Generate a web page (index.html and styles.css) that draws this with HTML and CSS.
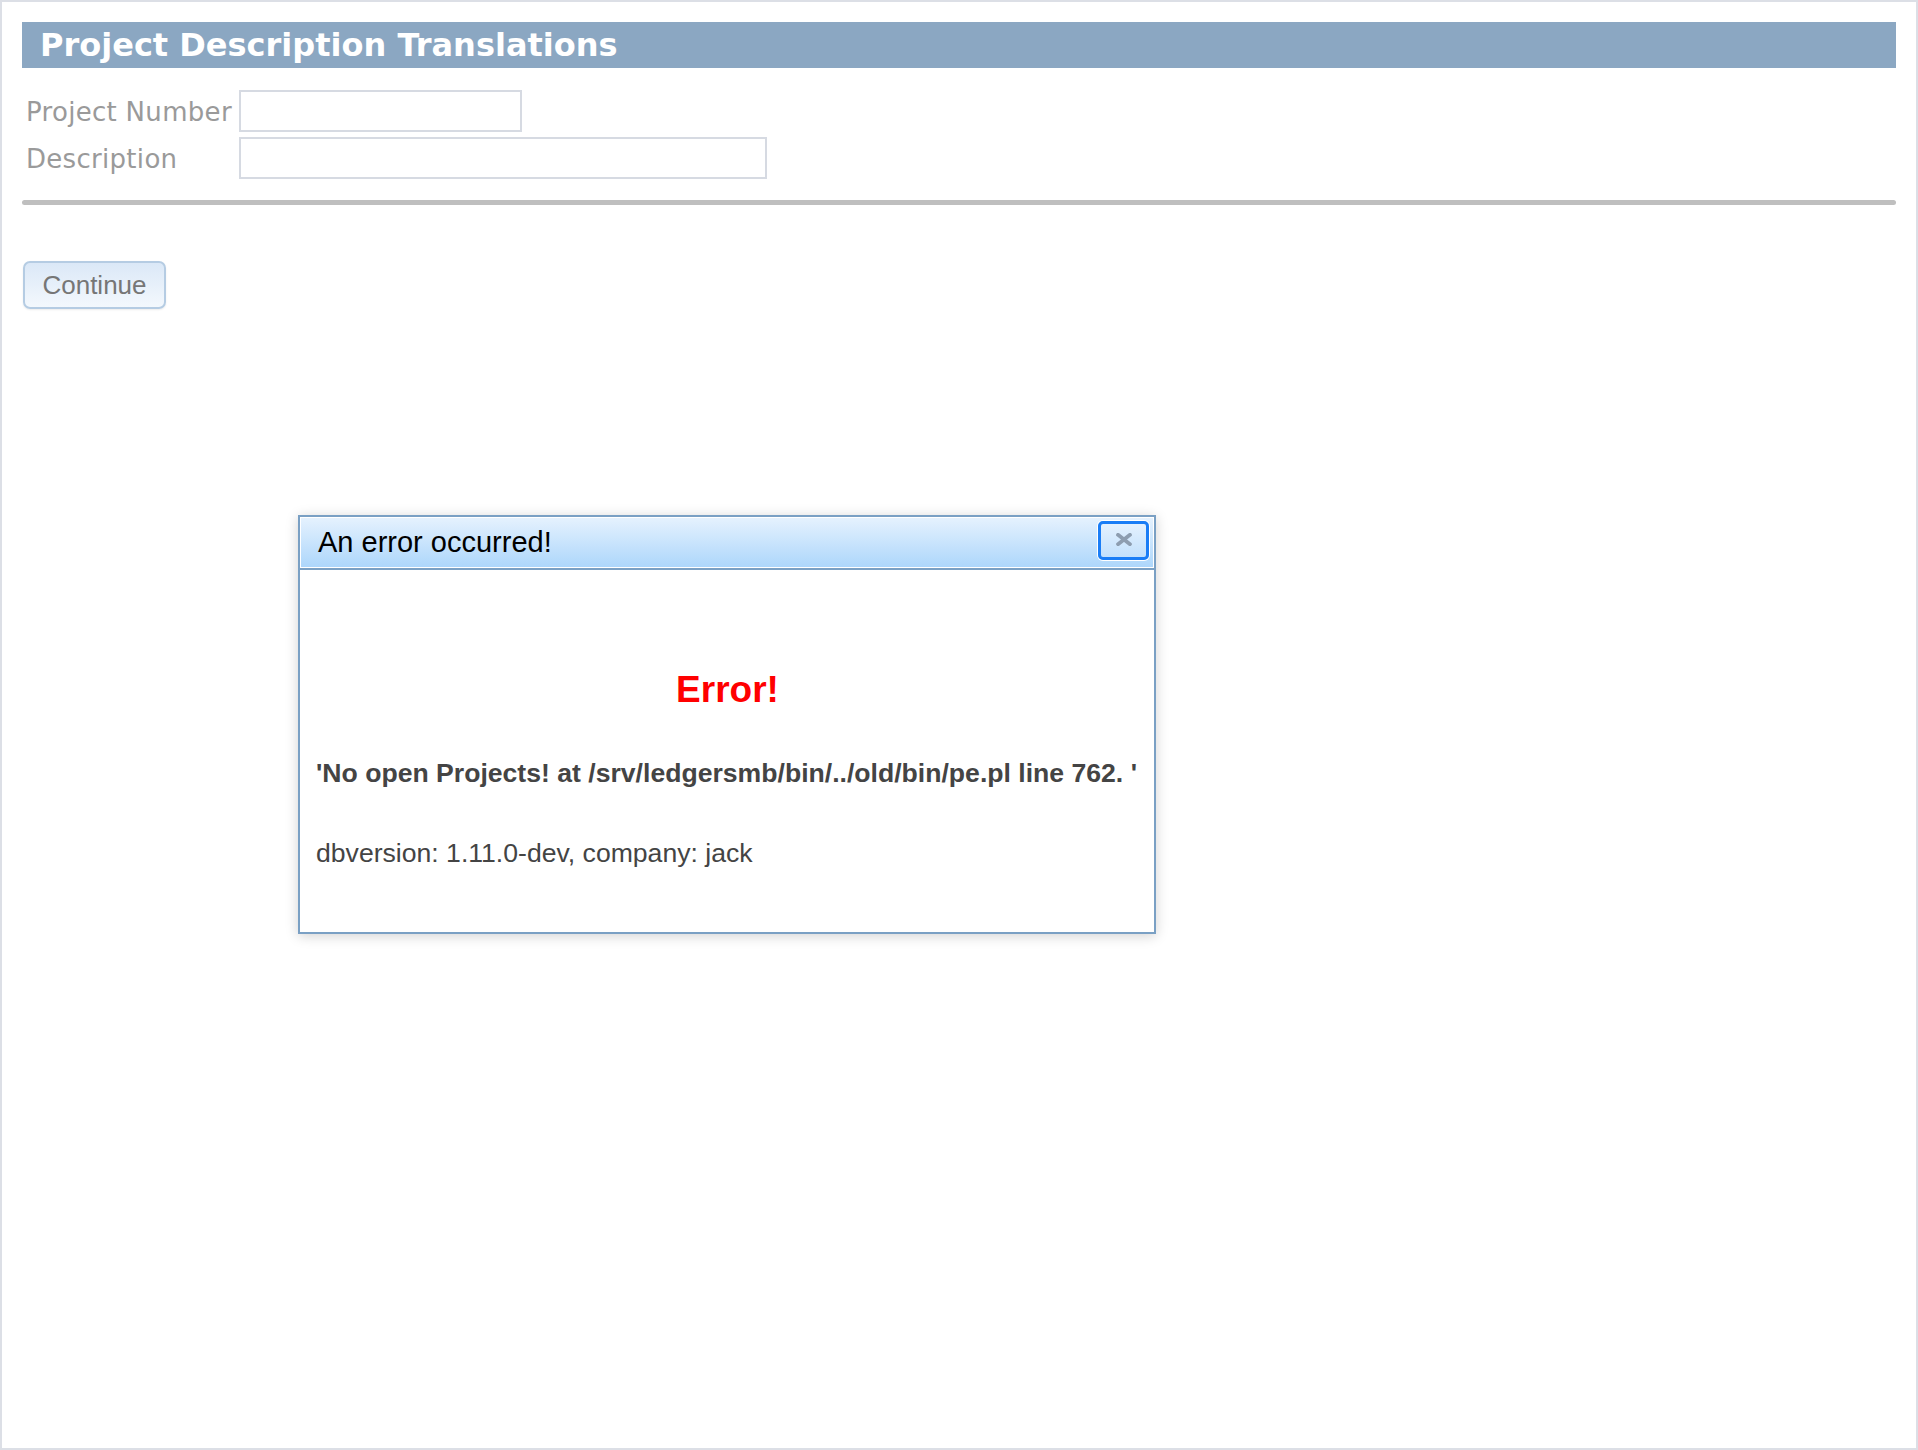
FILE: index.html
```html
<!DOCTYPE html>
<html lang="en">
<head>
<meta charset="utf-8">
<title>Project Description Translations</title>
<link rel="stylesheet" href="styles.css">
</head>
<body>
<div class="page">
  <h1 class="title-bar">Project Description Translations</h1>
  <form class="form">
    <label class="label" for="pn">Project Number</label>
    <input class="input input-short" id="pn" type="text">
    <label class="label" for="desc">Description</label>
    <input class="input input-long" id="desc" type="text">
  </form>
  <div class="rule"></div>
  <button class="btn" type="button">Continue</button>

  <div class="dialog">
    <div class="dialog-title">
      <span class="dialog-title-text">An error occurred!</span>
      <button class="dialog-close" type="button" aria-label="Close">
        <svg width="18" height="13" viewBox="0 0 18 13"><path d="M3 1.8 L15 11.2 M15 1.8 L3 11.2" stroke="#8d9db0" stroke-width="3.8" stroke-linecap="round" fill="none"/></svg>
      </button>
    </div>
    <div class="dialog-body">
      <h2 class="err-head">Error!</h2>
      <p class="err-msg">'No open Projects! at /srv/ledgersmb/bin/../old/bin/pe.pl line 762. '</p>
      <p class="err-info">dbversion: 1.11.0-dev, company: jack</p>
    </div>
  </div>
</div>
</body>
</html>
```

FILE: styles.css
```css
html, body {
  margin: 0;
  padding: 0;
  background: #ffffff;
}

.page {
  position: relative;
  box-sizing: border-box;
  width: 1918px;
  height: 1450px;
  border: 2px solid #dcdfe6;
  padding: 20px 20px 0 20px;
  font-family: "DejaVu Sans", Verdana, sans-serif;
}

.title-bar {
  margin: 0;
  height: 46px;
  line-height: 46px;
  padding-left: 18px;
  background: #8ba7c2;
  color: #ffffff;
  font-family: "DejaVu Sans", Verdana, sans-serif;
  font-weight: bold;
  font-size: 32px;
}

.form {
  display: grid;
  grid-template-columns: 217px auto;
  grid-auto-rows: 42px;
  row-gap: 5px;
  margin-top: 22px;
  align-items: start;
  justify-items: start;
}

.label {
  padding-left: 4px;
  font-size: 26px;
  letter-spacing: 0.3px;
  line-height: 44px;
  height: 42px;
  color: #9a9a9a;
  white-space: nowrap;
}

.input {
  box-sizing: border-box;
  height: 42px;
  border: 2px solid #d6dae2;
  background: #ffffff;
  margin: 0;
  padding: 0 6px;
  outline: none;
}

.input-short { width: 283px; }
.input-long { width: 528px; }

.rule {
  margin-top: 21px;
  height: 5px;
  border-radius: 3px;
  background: #bfbfbf;
}

.btn {
  display: block;
  box-sizing: border-box;
  margin: 56px 0 0 1px;
  width: 143px;
  height: 48px;
  padding: 0;
  border: 2px solid #b5cce3;
  border-radius: 7px;
  background: linear-gradient(#dbe8f7, #f3f8fd);
  box-shadow: 0 1px 2px rgba(0, 0, 0, 0.08);
  color: #767676;
  font-family: "Liberation Sans", Arial, sans-serif;
  font-size: 26px;
}

/* Error dialog overlay */
.dialog {
  position: absolute;
  left: 296px;
  top: 513px;
  box-sizing: border-box;
  width: 858px;
  height: 419px;
  border: 2px solid #7aa0c4;
  background: #ffffff;
  box-shadow: 0 2px 12px rgba(0, 0, 0, 0.18);
  font-family: "Liberation Sans", Arial, Helvetica, sans-serif;
}

.dialog-title {
  display: flex;
  align-items: center;
  justify-content: space-between;
  height: 51px;
  padding: 0 5px 0 18px;
  border-bottom: 2px solid #7aa0c4;
  background: linear-gradient(#e6f2fe, #acd6fb);
  box-shadow: inset 0 0 0 1px #ffffff;
}

.dialog-title-text {
  font-size: 29px;
  line-height: 51px;
  color: #000000;
}

.dialog-close {
  display: flex;
  align-items: center;
  justify-content: center;
  box-sizing: border-box;
  width: 51px;
  height: 39px;
  margin-top: -4px;
  padding: 0 0 3px 0;
  border: 3px solid #1a7df6;
  border-radius: 5px;
  background: linear-gradient(#e4f1fe, #c2e0fc);
  box-shadow: 0 0 0 1px #ffffff;
}

.dialog-body {
  padding: 0 15px 0 16px;
  color: #444444;
}

.err-head {
  margin: 98px 0 0 0;
  text-align: center;
  color: #ff0000;
  font-size: 37px;
  line-height: 44px;
  font-weight: bold;
}

.err-msg {
  margin: 45px 0 0 0;
  font-size: 26.6px;
  line-height: 32px;
  font-weight: bold;
  white-space: nowrap;
}

.err-info {
  margin: 48px 0 0 0;
  font-size: 26.6px;
  line-height: 32px;
}
```
